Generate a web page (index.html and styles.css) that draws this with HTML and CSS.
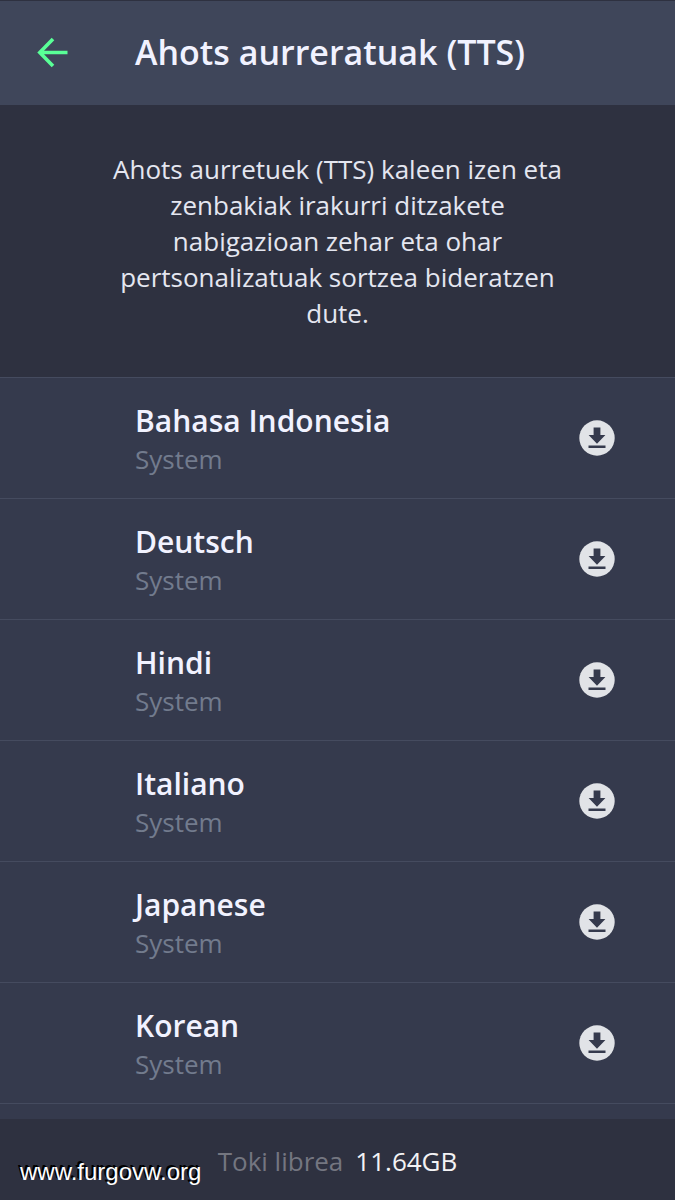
FILE: index.html
```html
<!DOCTYPE html>
<html lang="eu">
<head>
    <meta charset="UTF-8">
    <meta name="viewport" content="width=device-width, initial-scale=1.0">
    <link rel="stylesheet" href="styles.css">
    <title>Ahots aurreratuak (TTS)</title>
</head>
<body>
    <svg class="sprite" aria-hidden="true">
        <symbol id="download" viewBox="0 0 36 36">
            <circle cx="18" cy="18" r="17.7" fill="#e1e3e7"/>
            <path d="M14.6 7.5h6.8v7.5h5L18 23.8 9.6 15h5zM9.5 25.5h17v2.6h-17z" fill="#353a4d"/>
        </symbol>
    </svg>

    <header class="top-bar">
        <button type="button" class="back" aria-label="Atzera">
            <svg width="32" height="32" viewBox="0 0 32 32" fill="none" stroke="#59ff97" stroke-width="3.6">
                <path d="M31.500 16.500H4M17 3L3.800 16.500L17 30"/>
            </svg>
        </button>
        <h1>Ahots aurreratuak (TTS)</h1>
    </header>

    <p class="intro">Ahots aurretuek (TTS) kaleen izen eta zenbakiak irakurri ditzakete nabigazioan zehar eta ohar pertsonalizatuak sortzea bideratzen dute.</p>

    <ul class="voices">
        <li class="voice">
            <div class="voice-text">
                <h2>Bahasa Indonesia</h2>
                <p>System</p>
            </div>
            <button type="button" class="download" aria-label="Bahasa Indonesia"><svg><use href="#download"/></svg></button>
        </li>
        <li class="voice">
            <div class="voice-text">
                <h2>Deutsch</h2>
                <p>System</p>
            </div>
            <button type="button" class="download" aria-label="Deutsch"><svg><use href="#download"/></svg></button>
        </li>
        <li class="voice">
            <div class="voice-text">
                <h2>Hindi</h2>
                <p>System</p>
            </div>
            <button type="button" class="download" aria-label="Hindi"><svg><use href="#download"/></svg></button>
        </li>
        <li class="voice">
            <div class="voice-text">
                <h2>Italiano</h2>
                <p>System</p>
            </div>
            <button type="button" class="download" aria-label="Italiano"><svg><use href="#download"/></svg></button>
        </li>
        <li class="voice">
            <div class="voice-text">
                <h2>Japanese</h2>
                <p>System</p>
            </div>
            <button type="button" class="download" aria-label="Japanese"><svg><use href="#download"/></svg></button>
        </li>
        <li class="voice">
            <div class="voice-text">
                <h2>Korean</h2>
                <p>System</p>
            </div>
            <button type="button" class="download" aria-label="Korean"><svg><use href="#download"/></svg></button>
        </li>
    </ul>

    <footer class="storage">
        <span class="storage-label">Toki librea</span>
        <span>11.64GB</span>
        <span class="watermark">www.furgovw.org</span>
    </footer>
</body>
</html>
```
FILE: styles.css
```css
* {
    box-sizing: border-box;
}

body {
    margin: 0;
    min-height: 100vh;
    display: flex;
    flex-direction: column;
    background-color: #353a4d;
    color: #f1f2ff;
    font-family: "Open Sans", "Noto Sans", sans-serif;
}

h1, h2, p, ul {
    margin: 0;
    padding: 0;
}

button {
    padding: 0;
    border: none;
    background: none;
    cursor: pointer;
}

.sprite {
    display: none;
}

.top-bar {
    display: flex;
    align-items: center;
    height: 105px;
    padding: 0 36px 2px;
    background-color: #3f465a;
    border-top: 1px solid #2e3140;
}

.back {
    width: 99px;
    text-align: left;
}

.back svg {
    display: block;
}

h1 {
    font-size: 34px;
    font-weight: 600;
}

.intro {
    padding: 46px 110px;
    background-color: #2e3140;
    color: #e4e6f0;
    font-size: 26px;
    line-height: 36px;
    text-align: center;
}

.voices {
    flex: 1;
    list-style: none;
    border-top: 1px solid #454b5f;
}

.voice {
    display: flex;
    align-items: center;
    justify-content: space-between;
    height: 121px;
    padding: 0 60px 0 135px;
    border-bottom: 1px solid #454b5f;
}

.voice-text {
    padding-top: 4px;
}

.voice h2 {
    font-size: 30px;
    font-weight: 600;
    line-height: 38px;
}

.voice p {
    color: #727b8d;
    font-size: 26px;
    line-height: 38px;
}

.download svg {
    display: block;
    width: 36px;
    height: 36px;
}

.storage {
    position: relative;
    display: flex;
    align-items: center;
    justify-content: center;
    gap: 12px;
    height: 81px;
    padding-top: 2px;
    background-color: #2e3140;
    color: #f3f3f5;
    font-size: 26px;
}

.storage-label {
    color: #747680;
}

.watermark {
    position: absolute;
    left: 20px;
    bottom: 14px;
    color: #fff;
    font-family: "Liberation Sans", Arial, sans-serif;
    font-size: 24px;
    text-shadow: -1px -1px 0 #000, -2px -2px 0 #000;
}
```
